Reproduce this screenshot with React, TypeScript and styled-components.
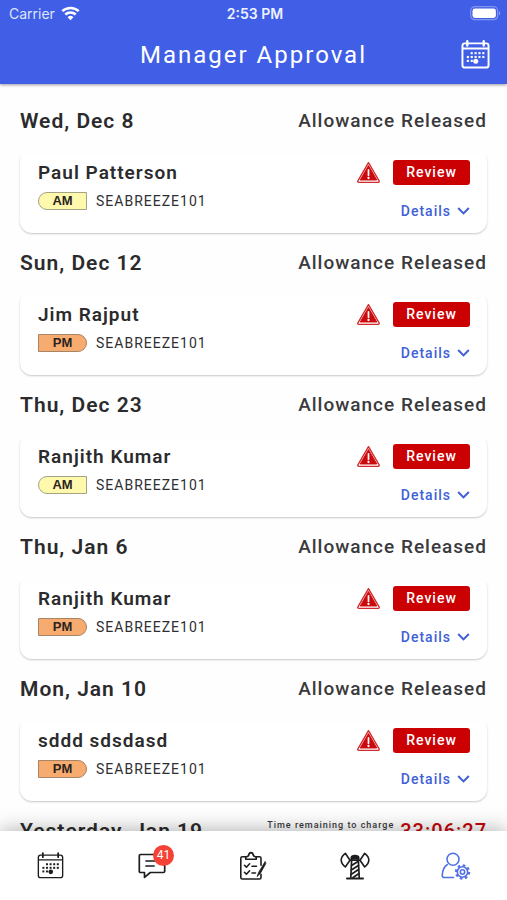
import React from "react";
import styled, { createGlobalStyle } from "styled-components";

const GlobalStyle = createGlobalStyle`
  *, *::before, *::after { box-sizing: border-box; }
  body { margin: 0; background: #fefefe; }
  h1, h2, h3, p { margin: 0; }
  button { font: inherit; letter-spacing: inherit; border: 0; padding: 0; background: none; cursor: pointer; }
`;

const Screen = styled.div`
  display: flex;
  flex-direction: column;
  height: 100vh;
  overflow: hidden;
  background: #fefefe;
  color: #2b2b2d;
  font-family: Roboto, "Liberation Sans", sans-serif;
`;

const Header = styled.header`
  position: relative;
  z-index: 1;
  flex: none;
  background: #405fe6;
  color: #fff;
  box-shadow: 0 1px 3px rgba(0, 0, 0, 0.4);
`;

const StatusBar = styled.div`
  display: grid;
  grid-template-columns: 1fr auto 1fr;
  align-items: center;
  height: 27px;
  padding: 0 6px 0 9px;
  font-family: Inter, sans-serif;
  font-size: 14px;
`;

const Carrier = styled.span`
  display: flex;
  align-items: center;
  gap: 6px;
  color: #dfe5fd;
`;

const Clock = styled.span`
  font-weight: 600;
  color: #eef1ff;
`;

const BatterySlot = styled.span`
  display: flex;
  justify-content: flex-end;
`;

const TitleBar = styled.div`
  display: grid;
  grid-template-columns: 32px 1fr 32px;
  align-items: center;
  height: 57px;
  padding: 0 16px 2px;
`;

const Title = styled.h1`
  grid-column: 2;
  text-align: center;
  font-size: 24px;
  font-weight: 400;
  letter-spacing: 2px;
`;

const IconButton = styled.button`
  display: flex;
  justify-content: center;
  color: #fff;
`;

const List = styled.main`
  flex: 1;
  min-height: 0;
  overflow: hidden;
  padding: 7px 20px 0;
`;

const DayHeading = styled.div`
  display: flex;
  align-items: center;
  justify-content: space-between;
  height: 59px;
`;

const DayTitle = styled.h2`
  font-size: 21px;
  font-weight: 600;
  line-height: 28px;
  letter-spacing: 1px;
`;

const DayStatus = styled.p`
  font-size: 19px;
  font-weight: 500;
  line-height: 28px;
  letter-spacing: 1px;
  color: #3a3a3c;
`;

const Remaining = styled.p`
  display: flex;
  align-items: center;
  gap: 6px;
`;

const RemainingLabel = styled.span`
  align-self: flex-start;
  font-size: 9px;
  font-weight: 500;
  line-height: 16px;
  letter-spacing: 1px;
  color: #3a3a3c;
`;

const RemainingTime = styled.span`
  font-size: 20px;
  font-weight: 500;
  line-height: 28px;
  letter-spacing: 1px;
  color: #c4060c;
`;

const Card = styled.article`
  display: flex;
  justify-content: space-between;
  height: 83px;
  padding: 10px 17px 0 18px;
  border-radius: 12px;
  background: #fff;
  box-shadow: 0 1px 2px rgba(0, 0, 0, 0.22);
  clip-path: inset(6px -4px -4px -4px);
`;

const Person = styled.div`
  display: flex;
  flex-direction: column;
  gap: 7px;
`;

const Name = styled.h3`
  font-size: 19px;
  font-weight: 600;
  line-height: 25px;
  letter-spacing: 1px;
`;

const Shift = styled.div`
  display: flex;
  align-items: center;
  gap: 9px;
  font-size: 14px;
  line-height: 18px;
  letter-spacing: 1px;
  color: #2f2f31;
`;

const Period = styled.span<{ $pm: boolean }>`
  width: 49px;
  height: 18px;
  border: 1px solid ${(p) => (p.$pm ? "#a58468" : "#a3a385")};
  border-radius: ${(p) => (p.$pm ? "0 9px 9px 0" : "9px 0 0 9px")};
  background: ${(p) => (p.$pm ? "#f8ab6f" : "#fff9ad")};
  color: #2b2420;
  font-family: "Liberation Sans", Arial, sans-serif;
  font-size: 13px;
  font-weight: 700;
  line-height: 16px;
  letter-spacing: 0;
  text-align: center;
`;

const Actions = styled.div`
  display: flex;
  flex-direction: column;
  align-items: flex-end;
  gap: 15px;
`;

const ReviewRow = styled.div`
  display: flex;
  align-items: center;
  gap: 12px;
`;

const ReviewButton = styled.button`
  width: 77px;
  height: 25px;
  border-radius: 3px;
  background: #cb0003;
  color: #fff;
  font-size: 14px;
  font-weight: 500;
  line-height: 25px;
  letter-spacing: 1px;
`;

const DetailsButton = styled.button`
  display: flex;
  align-items: center;
  gap: 6px;
  color: #405fd8;
  font-size: 14px;
  font-weight: 500;
  line-height: 22px;
  letter-spacing: 1px;
`;

const TabBar = styled.nav`
  position: relative;
  z-index: 1;
  flex: none;
  display: grid;
  grid-template-columns: repeat(5, 1fr);
  height: 69px;
  background: #fff;
  box-shadow: 0 0 20px rgba(0, 0, 0, 0.34);
`;

const Tab = styled.a<{ $active?: boolean }>`
  display: flex;
  align-items: center;
  justify-content: center;
  color: ${(p) => (p.$active ? "#5270e6" : "#1d1d1f")};
  text-decoration: none;
`;

const BadgeAnchor = styled.span`
  position: relative;
  display: flex;
`;

const Badge = styled.span`
  position: absolute;
  top: -8px;
  right: -8px;
  width: 21px;
  height: 21px;
  border-radius: 50%;
  background: #f44336;
  color: #fff;
  font-size: 12px;
  line-height: 21px;
  text-align: center;
`;

function WifiIcon() {
  return (
    <svg width="19" height="15" viewBox="0 0 19 15" fill="none" stroke="#fff" strokeWidth="2.5" aria-hidden="true">
      <path d="M1.3 5.2a11.8 11.8 0 0 1 16.4 0" />
      <path d="M4.3 8.5a7.5 7.5 0 0 1 10.4 0" />
      <path d="M9.5 14.2 6.6 11.3a4.1 4.1 0 0 1 5.8 0z" fill="#fff" stroke="none" />
    </svg>
  );
}

function BatteryIcon() {
  return (
    <svg width="31" height="15" viewBox="0 0 31 15" aria-hidden="true">
      <rect x="0.7" y="0.7" width="27" height="13" rx="4" fill="none" stroke="#8095ef" strokeWidth="1.2" />
      <rect x="2.5" y="2.5" width="23.4" height="9.4" rx="2.4" fill="#fff" />
      <path d="M29 5.2c1.6.6 1.6 3.4 0 4z" fill="#93a5f3" />
    </svg>
  );
}

const calendarDots = [
  [11, 13.5], [15, 13.5], [19, 13.5], [23, 13.5],
  [7, 17.5], [11, 17.5], [15, 17.5], [19, 17.5], [23, 17.5],
  [7, 21.5], [11, 21.5],
];

function CalendarIcon({ size, stroke }: { size: number; stroke: number }) {
  return (
    <svg width={size} height={size} viewBox="0 0 30 30" fill="none" stroke="currentColor" strokeWidth={stroke} strokeLinecap="round" aria-hidden="true">
      <rect x="1.5" y="3.5" width="27" height="25" rx="2.5" />
      <path d="M2 8.8h26" />
      <path d="M6.5 1.2v4.5M23.5 1.2v4.5" strokeWidth={stroke + 0.5} />
      {calendarDots.map(([x, y]) => (
        <rect key={`${x}-${y}`} x={x - 1} y={y - 1} width="2.2" height="2.2" fill="currentColor" stroke="none" />
      ))}
      <circle cx="15.3" cy="22" r="2.6" fill="currentColor" stroke="none" />
    </svg>
  );
}

function WarningIcon() {
  return (
    <svg width="25" height="23" viewBox="0 1 26 23" aria-hidden="true">
      <path d="M13 2.2 24 21.2c.5.9 0 1.5-.9 1.5H2.9c-.9 0-1.4-.6-.9-1.5z" fill="#fff" stroke="#d3292c" strokeWidth="1.4" strokeLinejoin="round" />
      <path d="M13 5.3 21.6 20.3H4.4z" fill="#cb0a0d" stroke="#cb0a0d" strokeWidth="1" strokeLinejoin="round" />
      <path d="M13 9.8v5.6" stroke="#fff" strokeWidth="1.8" strokeLinecap="round" />
      <circle cx="13" cy="18.2" r="1.2" fill="#fff" />
    </svg>
  );
}

function ChevronIcon() {
  return (
    <svg width="13" height="10" viewBox="0 0 13 10" fill="none" stroke="currentColor" strokeWidth="2" aria-hidden="true">
      <path d="M1.2 2 6.5 7.4 11.8 2" />
    </svg>
  );
}

function MessageIcon() {
  return (
    <svg width="28" height="26" viewBox="0 0 28 26" fill="none" stroke="currentColor" strokeWidth="1.7" strokeLinejoin="round" strokeLinecap="round" aria-hidden="true">
      <path d="M2.6 1.5h22.8q1.3 0 1.3 1.3v15.4q0 1.3-1.3 1.3H12.3L6.5 24.4V19.5H2.6q-1.3 0-1.3-1.3V2.8q0-1.3 1.3-1.3z" />
      <path d="M8 8h10.5M8 13h8" />
    </svg>
  );
}

function ChecklistIcon() {
  return (
    <svg width="28" height="30" viewBox="0 0 28 30" fill="none" stroke="currentColor" strokeWidth="1.6" strokeLinejoin="round" strokeLinecap="round" aria-hidden="true">
      <path d="M7 5.8H3.4q-1.6 0-1.6 1.6v19q0 1.6 1.6 1.6h17q1.6 0 1.6-1.6v-3.2M17 5.8h3.4q1.6 0 1.6 1.6v6.8" />
      <path d="M6.7 8.3v-1.9l2.8-1.6Q9.9 1.6 12 1.6t2.5 3.2l2.8 1.6v1.9z" />
      <path d="m5.5 14.3 1.9 1.9 3.2-3.4M5.5 21.3l1.9 1.9 3.2-3.4M13 15.2h4.5M13 22h3.5" />
      <path d="m26 10.8-6.3 10.5-1.6 4.2 3.2-3 5.4-9.8z" fill="currentColor" strokeWidth="0.8" />
    </svg>
  );
}

function TowerIcon() {
  return (
    <svg width="30" height="28" viewBox="0 0 30 28" fill="none" stroke="currentColor" strokeWidth="1.6" strokeLinejoin="round" strokeLinecap="round" aria-hidden="true">
      <path d="M5.3 1.3C-.2 5.5-.2 10.5 5.3 15L10 8.2zM24.7 1.3c5.5 4.2 5.5 9.2 0 13.7L20 8.2z" />
      <path d="M10 8.2h10" />
      <path d="M11.3 7V5.3Q11.5 3.7 15 3.5q3.5.2 3.7 1.8V7z" fill="currentColor" />
      <path d="M11.7 7 10.8 25.5M18.3 7l.9 18.5" strokeWidth="1.7" />
      <path d="m11.5 13.5 6.5-4M11.4 18l7-4.5M11 22.5l7.5-5M13 25.5l6-4" strokeWidth="1.7" />
      <path d="M7 26.6h16" strokeWidth="2" />
    </svg>
  );
}

function UserSettingsIcon() {
  return (
    <svg width="30" height="28" viewBox="0 0 30 28" fill="none" stroke="currentColor" strokeWidth="1.6" strokeLinecap="round" aria-hidden="true">
      <circle cx="12" cy="7.3" r="6" />
      <path d="M6.2 12.7C3.3 14.5 1.5 18 1.2 23.2q0 2.3 2.3 2.3H12.5" />
      <circle cx="21.5" cy="20" r="5.2" strokeWidth="1.6" />
      <circle cx="21.5" cy="20" r="6.6" strokeWidth="2.2" strokeDasharray="2.6 2.584" strokeLinecap="butt" />
      <circle cx="21.5" cy="20" r="2.2" />
    </svg>
  );
}

type Entry = { date: string; name: string; period: "AM" | "PM"; site: string };

const entries: Entry[] = [
  { date: "Wed, Dec 8", name: "Paul Patterson", period: "AM", site: "SEABREEZE101" },
  { date: "Sun, Dec 12", name: "Jim Rajput", period: "PM", site: "SEABREEZE101" },
  { date: "Thu, Dec 23", name: "Ranjith Kumar", period: "AM", site: "SEABREEZE101" },
  { date: "Thu, Jan 6", name: "Ranjith Kumar", period: "PM", site: "SEABREEZE101" },
  { date: "Mon, Jan 10", name: "sddd sdsdasd", period: "PM", site: "SEABREEZE101" },
];

function ApprovalSection({ entry }: { entry: Entry }) {
  return (
    <section>
      <DayHeading>
        <DayTitle>{entry.date}</DayTitle>
        <DayStatus>Allowance Released</DayStatus>
      </DayHeading>
      <Card>
        <Person>
          <Name>{entry.name}</Name>
          <Shift>
            <Period $pm={entry.period === "PM"}>{entry.period}</Period>
            <span>{entry.site}</span>
          </Shift>
        </Person>
        <Actions>
          <ReviewRow>
            <WarningIcon />
            <ReviewButton type="button">Review</ReviewButton>
          </ReviewRow>
          <DetailsButton type="button">
            Details
            <ChevronIcon />
          </DetailsButton>
        </Actions>
      </Card>
    </section>
  );
}

export default function App() {
  return (
    <Screen>
      <GlobalStyle />
      <Header>
        <StatusBar>
          <Carrier>
            Carrier
            <WifiIcon />
          </Carrier>
          <Clock>2:53 PM</Clock>
          <BatterySlot>
            <BatteryIcon />
          </BatterySlot>
        </StatusBar>
        <TitleBar>
          <Title>Manager Approval</Title>
          <IconButton type="button" aria-label="Open calendar">
            <CalendarIcon size={29} stroke={2} />
          </IconButton>
        </TitleBar>
      </Header>
      <List>
        {entries.map((entry) => (
          <ApprovalSection key={entry.date} entry={entry} />
        ))}
        <section>
          <DayHeading>
            <DayTitle>Yesterday, Jan 19</DayTitle>
            <Remaining>
              <RemainingLabel>Time remaining to charge</RemainingLabel>
              <RemainingTime>33:06:27</RemainingTime>
            </Remaining>
          </DayHeading>
        </section>
      </List>
      <TabBar aria-label="Main">
        <Tab href="#calendar" aria-label="Calendar">
          <CalendarIcon size={27} stroke={1.5} />
        </Tab>
        <Tab href="#messages" aria-label="Messages">
          <BadgeAnchor>
            <MessageIcon />
            <Badge>41</Badge>
          </BadgeAnchor>
        </Tab>
        <Tab href="#tasks" aria-label="Tasks">
          <ChecklistIcon />
        </Tab>
        <Tab href="#tower" aria-label="Broadcast">
          <TowerIcon />
        </Tab>
        <Tab href="#manager" aria-label="Manager approval" aria-current="page" $active>
          <UserSettingsIcon />
        </Tab>
      </TabBar>
    </Screen>
  );
}
